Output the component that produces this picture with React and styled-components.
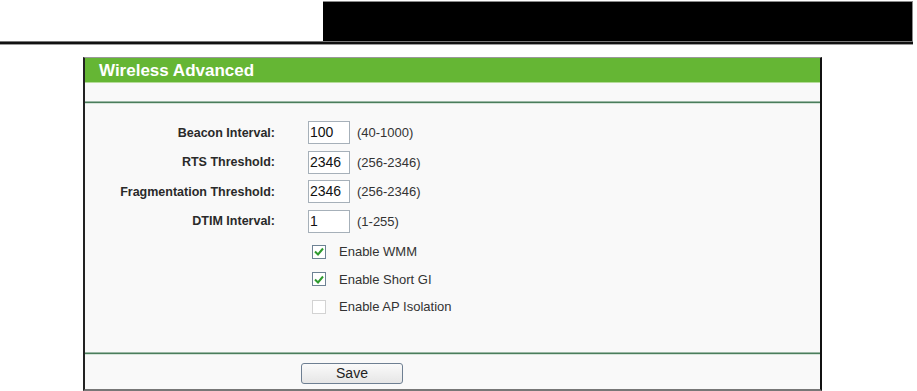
import styled, { createGlobalStyle } from 'styled-components';

const GlobalStyle = createGlobalStyle`
    html, body {
        margin: 0;
        padding: 0;
        background: #fff;
        font-family: "Liberation Sans", Arial, sans-serif;
    }
`

const TopBar = styled.div`
    width: 913px;
    padding-top: 1px;
    display: flex;
    flex-flow: column nowrap;
`
const BlackBox = styled.div`
    margin-left: 323px;
    height: 39px;
    background: #000;
    border-top: 1px solid #8a8a8a;
    border-right: 1px solid #8a8a8a;
`
const Rule = styled.div`
    height: 2px;
    background: #111;
    border-top: 1px solid #777;
    border-bottom: 1px solid #9a9a9a;
`

const Panel = styled.div`
    margin: 12px 0 0 83px;
    width: 735px;
    background: #f9f9f9;
    border-left: 2px solid #222;
    border-right: 2px solid #111;
    border-top: 1px solid #999;
    border-bottom: 2px solid #777;
`
const TitleBar = styled.div`
    height: 25px;
    background: #65b634;
    border-bottom: 1px solid #b6dc9a;
    color: #fff;
    font-weight: bold;
    font-size: 17px;
    line-height: 25px;
    padding-left: 14px;
    box-sizing: border-box;
`
const Band = styled.div`
    height: 18px;
`
const Separator = styled.div`
    height: 1px;
    background: #4b7d5c;
    border-top: 1px solid #9bb8a5;
    border-bottom: 1px solid #d6e4da;
`
const Form = styled.div`
    display: flex;
    flex-flow: column nowrap;
    padding: 14px 0 31px;
`
const Row = styled.div`
    display: grid;
    grid-template-columns: 190px 42px auto;
    column-gap: 33px;
    align-items: center;
    height: 29.5px;
`
const Label = styled.div`
    text-align: right;
    font-weight: bold;
    font-size: 12.5px;
    color: #2a2a2a;
`
const TextInput = styled.div`
    box-sizing: border-box;
    width: 42px;
    height: 23px;
    border: 1px solid #a6b0b9;
    background: #fff;
    font-size: 14px;
    line-height: 21px;
    padding-left: 1px;
    color: #111;
`
const Hint = styled.span`
    font-size: 13px;
    color: #333;
    margin-left: -26px;
`
const CheckRow = styled.div`
    display: flex;
    align-items: center;
    gap: 13px;
    margin-left: 227px;
    height: 27.5px;
    margin-top: ${p => p.$mt || 0}px;
    font-size: 13px;
    color: #333;
`
const Box = styled.span`
    box-sizing: border-box;
    width: 14px;
    height: 14px;
    border: 1px solid ${p => (p.$on ? '#6d8294' : '#d3d3d3')};
    background: #fff;
    display: flex;
    align-items: center;
    justify-content: center;
`
const Footer = styled.div`
    height: 34px;
    display: flex;
    align-items: flex-start;
    padding: 8px 0 0 216px;
    box-sizing: border-box;
`
const SaveButton = styled.button`
    width: 102px;
    height: 21px;
    border: 1px solid #6e7f92;
    border-radius: 3px;
    background: linear-gradient(#fafafa, #e6e6e6);
    font-family: "Liberation Sans", Arial, sans-serif;
    font-size: 14px;
    color: #222;
    padding: 0;
`

const fields = [
    { label: 'Beacon Interval:', value: '100', hint: '(40-1000)' },
    { label: 'RTS Threshold:', value: '2346', hint: '(256-2346)' },
    { label: 'Fragmentation Threshold:', value: '2346', hint: '(256-2346)' },
    { label: 'DTIM Interval:', value: '1', hint: '(1-255)' },
]

const checks = [
    { label: 'Enable WMM', on: true },
    { label: 'Enable Short GI', on: true },
    { label: 'Enable AP Isolation', on: false },
]

function Tick() {
    return (
        <svg width="10" height="9" viewBox="0 0 10 9">
            <path d="M1 4.5 L4 7.5 L9 1.5" fill="none" stroke="#2e9a2e" strokeWidth="2" />
        </svg>
    )
}

export default function App() {
    return (
        <>
            <GlobalStyle />
            <TopBar>
                <BlackBox />
                <Rule />
            </TopBar>
            <Panel>
                <TitleBar>Wireless Advanced</TitleBar>
                <Band />
                <Separator />
                <Form>
                    {fields.map(f => (
                        <Row key={f.label}>
                            <Label>{f.label}</Label>
                            <TextInput>{f.value}</TextInput>
                            <Hint>{f.hint}</Hint>
                        </Row>
                    ))}
                    {checks.map((c, i) => (
                        <CheckRow key={c.label} $mt={i === 0 ? 2 : 0}>
                            <Box $on={c.on}>{c.on && <Tick />}</Box>
                            <span>{c.label}</span>
                        </CheckRow>
                    ))}
                </Form>
                <Separator />
                <Footer>
                    <SaveButton>Save</SaveButton>
                </Footer>
            </Panel>
        </>
    )
}
